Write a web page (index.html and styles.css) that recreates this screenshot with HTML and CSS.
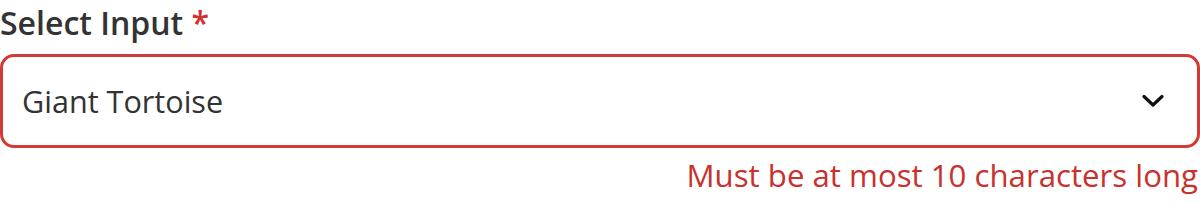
FILE: index.html
```html
<!DOCTYPE html>
<html lang="en">
<head>
    <meta charset="UTF-8">
    <title>Select Input</title>
    <link rel="stylesheet" href="styles.css">
</head>
<body>

    <!-- Select field with validation error -->
    <div class="field">
        <label class="field-label" for="animal">Select Input <span class="required">*</span></label>
        <div class="select-wrap">
            <select id="animal" class="select-input">
                <option>Giant Tortoise</option>
                <option>Komodo Dragon</option>
                <option>Red Panda</option>
            </select>
            <svg class="chevron" width="22" height="14" viewBox="0 0 22 14" aria-hidden="true">
                <path d="M2 2.5 L11 11 L20 2.5" fill="none" stroke="#111" stroke-width="3.2" stroke-linecap="round" stroke-linejoin="round"/>
            </svg>
        </div>
        <div class="error-text">Must be at most 10 characters long</div>
    </div>

</body>
</html>
```

FILE: styles.css
```css
body {
    font-family: "Open Sans", "Noto Sans", sans-serif;
    background: #ffffff;
    margin: 0;
    padding: 0;
}

.field {
    display: flex;
    flex-direction: column;
    width: 1200px;
}

    .field-label {
        font-size: 32px;
        font-weight: 600;
        color: #333333;
        line-height: 46px;
        margin-bottom: 8px;
    }

        .field-label .required {
            color: #d0312d;
        }

.select-wrap {
    position: relative;
}

    .select-input {
        appearance: none;
        -webkit-appearance: none;
        width: 100%;
        height: 94px;
        box-sizing: border-box;
        border: 3px solid #d03a37;
        border-radius: 14px;
        background: #ffffff;
        padding: 0 19px;
        font-family: inherit;
        font-size: 30.6px;
        color: #333333;
        outline: none;
    }

    .select-wrap .chevron {
        position: absolute;
        right: 36px;
        top: 40px;
        pointer-events: none;
    }

.error-text {
    text-align: right;
    font-size: 31.2px;
    color: #c8312d;
    line-height: 44px;
    margin-top: 5px;
    padding-right: 2px;
}
```
